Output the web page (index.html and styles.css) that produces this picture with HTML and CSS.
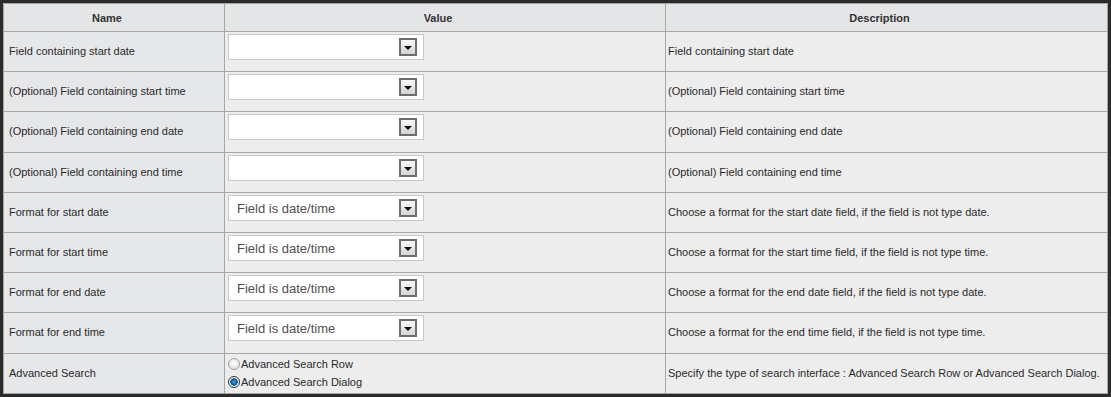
FILE: index.html
```html
<!DOCTYPE html>
<html lang="en">
  <head>
    <meta charset="UTF-8" />
    <title>Date range filter settings</title>
    <link rel="stylesheet" href="styles.css">
  </head>
  <body>
    <table class="props">
      <colgroup>
        <col class="c-name">
        <col class="c-value">
        <col class="c-desc">
      </colgroup>
      <thead>
        <tr>
          <th>Name</th>
          <th>Value</th>
          <th>Description</th>
        </tr>
      </thead>
      <tbody>
        <tr>
          <td class="name">Field containing start date</td>
          <td class="value"><div class="select"><span class="sel-text"></span><span class="sel-btn"></span></div></td>
          <td class="desc">Field containing start date</td>
        </tr>
        <tr>
          <td class="name">(Optional) Field containing start time</td>
          <td class="value"><div class="select"><span class="sel-text"></span><span class="sel-btn"></span></div></td>
          <td class="desc">(Optional) Field containing start time</td>
        </tr>
        <tr class="tall">
          <td class="name">(Optional) Field containing end date</td>
          <td class="value"><div class="select"><span class="sel-text"></span><span class="sel-btn"></span></div></td>
          <td class="desc">(Optional) Field containing end date</td>
        </tr>
        <tr>
          <td class="name">(Optional) Field containing end time</td>
          <td class="value"><div class="select"><span class="sel-text"></span><span class="sel-btn"></span></div></td>
          <td class="desc">(Optional) Field containing end time</td>
        </tr>
        <tr>
          <td class="name">Format for start date</td>
          <td class="value"><div class="select"><span class="sel-text">Field is date/time</span><span class="sel-btn"></span></div></td>
          <td class="desc">Choose a format for the start date field, if the field is not type date.</td>
        </tr>
        <tr>
          <td class="name">Format for start time</td>
          <td class="value"><div class="select"><span class="sel-text">Field is date/time</span><span class="sel-btn"></span></div></td>
          <td class="desc">Choose a format for the start time field, if the field is not type time.</td>
        </tr>
        <tr>
          <td class="name">Format for end date</td>
          <td class="value"><div class="select"><span class="sel-text">Field is date/time</span><span class="sel-btn"></span></div></td>
          <td class="desc">Choose a format for the end date field, if the field is not type date.</td>
        </tr>
        <tr class="tall">
          <td class="name">Format for end time</td>
          <td class="value"><div class="select"><span class="sel-text">Field is date/time</span><span class="sel-btn"></span></div></td>
          <td class="desc">Choose a format for the end time field, if the field is not type time.</td>
        </tr>
        <tr>
          <td class="name">Advanced Search</td>
          <td class="value radios">
            <label class="radio"><input type="radio" name="adv"><span>Advanced Search Row</span></label>
            <label class="radio"><input type="radio" name="adv" checked><span>Advanced Search Dialog</span></label>
          </td>
          <td class="desc">Specify the type of search interface : Advanced Search Row or Advanced Search Dialog.</td>
        </tr>
      </tbody>
    </table>
  </body>
</html>
```

FILE: styles.css
```css
html,
body {
  margin: 0;
  padding: 0;
  background: #2b2b2b;
  height: 100%;
}

body {
  padding: 3px 3px 0 3px;
  font-family: "Liberation Sans", Arial, sans-serif;
  font-size: 11px;
  color: #2a2a2a;
}

/* 属性表格 */
.props {
  width: 1105px;
  border-collapse: collapse;
  border: 1px solid #a6a6a6;
  table-layout: fixed;
}

.c-name {
  width: 221px;
}

.c-value {
  width: 441px;
}

.props th,
.props td {
  border: 1px solid #a6a6a6;
  padding: 0;
  white-space: nowrap;
  overflow: hidden;
}

.props th {
  height: 27px;
  background: #e4e5e7;
  font-weight: bold;
  text-align: center;
  padding-right: 14px;
  color: #333;
}

.props td {
  height: 37px;
  padding-bottom: 2px;
  background: #ededed;
}

.props tr.tall td {
  height: 38px;
}

.props td.name {
  background: #e6e7e9;
  padding-left: 5px;
}

.props td.desc {
  padding-left: 2px;
}

.props td.value {
  vertical-align: top;
  padding-left: 3px;
}

/* 下拉框 */
.select {
  width: 194px;
  height: 24px;
  margin-top: 2px;
  background: #fff;
  border: 1px solid #c9c9c9;
  display: flex;
  align-items: center;
}

.sel-text {
  flex: 1;
  padding-left: 8px;
  font-size: 13px;
  color: #505050;
}

.sel-btn {
  width: 14px;
  height: 14px;
  margin-right: 6px;
  border: 2px solid #6e6e6e;
  background: linear-gradient(#fafafa, #d4d4d4);
  position: relative;
}

.sel-btn::after {
  content: "";
  position: absolute;
  left: 3px;
  top: 6px;
  border-left: 4px solid transparent;
  border-right: 4px solid transparent;
  border-top: 4px solid #111;
}

/* 单选按钮 */
.radios .radio:first-child {
  margin-top: 1px;
}

.radio {
  display: flex;
  align-items: center;
  height: 18px;
}

.radio input {
  appearance: none;
  -webkit-appearance: none;
  margin: 0;
  width: 12px;
  height: 12px;
  border-radius: 50%;
  border: 1px solid #a0a0a0;
  background: radial-gradient(circle at 50% 40%, #fdfdfd, #d8d8d8);
}

.radio input:checked {
  border-color: #333;
  background: radial-gradient(circle, #4fb0ee 0, #0d5a9a 2.5px, #1a6fb5 3.5px, #f4f4f4 4px, #dcdcdc 100%);
}

.radio span {
  margin-left: 1px;
}
```
